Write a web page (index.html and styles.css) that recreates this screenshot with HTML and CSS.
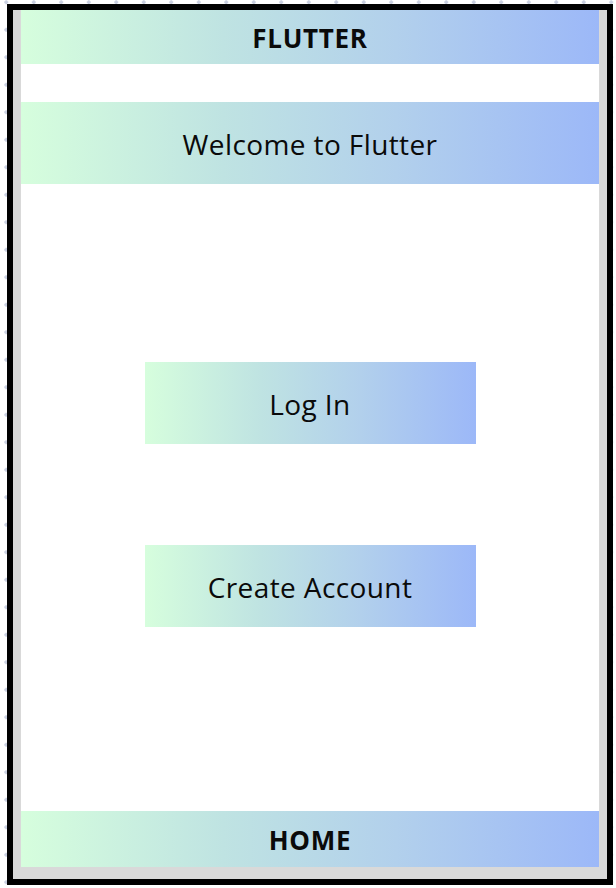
FILE: index.html
```html
<!DOCTYPE html>
<html lang="en">
<head>
  <meta charset="UTF-8" />
  <meta name="viewport" content="width=device-width, initial-scale=1.0" />
  <title>Flutter</title>
  <link rel="stylesheet" href="styles.css">
</head>
<body>
  <div class="phone">
    <div class="shade">
      <div class="screen">
        <header class="bar top-bar">FLUTTER</header>
        <div class="banner">Welcome to Flutter</div>
        <button class="btn login-btn" type="button">Log In</button>
        <button class="btn create-btn" type="button">Create Account</button>
        <footer class="bar bottom-bar">HOME</footer>
      </div>
    </div>
  </div>
</body>
</html>
```

FILE: styles.css
```css
:root {
  --grad: linear-gradient(90deg, #d6fedd 0%, #bfe3e2 35%, #b2d0ec 65%, #9cb8f8 100%);
  --ink: #0a0a0a;
}
body {
  margin: 0;
  font-family: "Open Sans", Arial, sans-serif;
  color: var(--ink);
  background-color: #fff;
  background-image: radial-gradient(circle, #c9cfe0 1.6px, transparent 2px);
  background-size: 27.5px 27.5px;
  background-position: -7.5px -11.5px;
  height: 888px;
  overflow: hidden;
}
.phone {
  margin: 4px 3px 0 7px;
  width: 594px;
  height: 869px;
  border: 6px solid #000;
}
.shade {
  background: #d9d9d9;
  height: 100%;
  padding: 0 8px 12px 8px;
  box-sizing: border-box;
}
.screen {
  background: #fff;
  height: 100%;
  display: flex;
  flex-direction: column;
  align-items: center;
}
.bar, .banner, .btn {
  background: var(--grad);
  display: flex;
  align-items: center;
  justify-content: center;
  padding-top: 2px;
  box-sizing: border-box;
}
.bar {
  width: 100%;
  font-weight: 700;
  font-size: 26px;
  letter-spacing: 0.7px;
}
.top-bar { height: 54px; }
.bottom-bar {
  height: 56px;
  margin-top: auto;
}
.banner {
  width: 100%;
  height: 82px;
  margin-top: 38px;
  font-size: 28px;
  letter-spacing: 0.4px;
}
.btn {
  width: 331px;
  height: 82px;
  border: none;
  padding-left: 0;
  padding-right: 0;
  font-family: inherit;
  font-size: 28px;
  letter-spacing: 0.4px;
  color: var(--ink);
  cursor: pointer;
}
.login-btn { margin-top: 178px; }
.create-btn { margin-top: 101px; }
```
